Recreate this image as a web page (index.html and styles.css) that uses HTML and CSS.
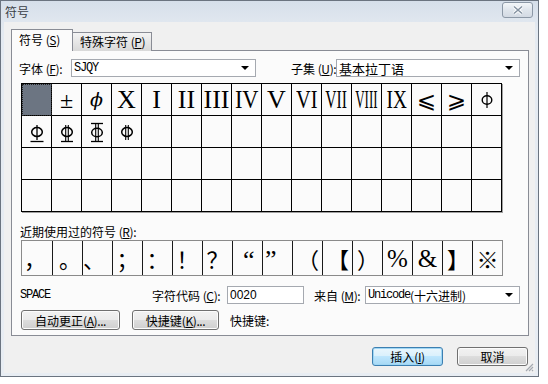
FILE: index.html
```html
<!DOCTYPE html>
<html lang="zh-CN">
<head>
<meta charset="utf-8">
<title>符号</title>
<link rel="stylesheet" href="styles.css">
</head>
<body>
<div class="window">
  <div class="titlebar">
    <span class="title">符号</span>
    <div class="close">
      <svg width="16" height="10" viewBox="0 0 16 10"><path d="M4 1.5 L12 8.5 M12 1.5 L4 8.5" stroke="#fff" stroke-width="3.2" fill="none"/><path d="M4 1.5 L12 8.5 M12 1.5 L4 8.5" stroke="#8593a2" stroke-width="1.6" fill="none"/></svg>
    </div>
  </div>
  <div class="client">
    <div class="tabs">
      <div class="tab active">符号 <span class="acc">(<u>S</u>)</span></div>
      <div class="tab">特殊字符 <span class="acc">(<u>P</u>)</span></div>
    </div>
    <div class="panel">
      <div class="row fontrow">
        <span class="lbl l-font">字体 <span class="acc">(<u>F</u>):</span></span>
        <div class="select s-font"><span class="mono">SJQY</span><i class="arrow"></i></div>
        <span class="lbl l-sub">子集 <span class="acc">(<u>U</u>):</span></span>
        <div class="select s-sub"><span>基本拉丁语</span><i class="arrow"></i></div>
      </div>

      <div class="grid">
        <div class="cell sel"></div>
        <div class="cell"><span class="sy">±</span></div>
        <div class="cell"><span class="sy phi">ϕ</span></div>
        <div class="cell"><span class="rn">X</span></div>
        <div class="cell"><span class="rn">I</span></div>
        <div class="cell"><span class="rn">II</span></div>
        <div class="cell"><span class="rn">III</span></div>
        <div class="cell"><span class="rn c-iv">IV</span></div>
        <div class="cell"><span class="rn">V</span></div>
        <div class="cell"><span class="rn c-vi">VI</span></div>
        <div class="cell"><span class="rn c-vii">VII</span></div>
        <div class="cell"><span class="rn c-viii">VIII</span></div>
        <div class="cell"><span class="rn c-ix">IX</span></div>
        <div class="cell"><span class="sy le">⩽</span></div>
        <div class="cell"><span class="sy le">⩾</span></div>
        <div class="cell"><svg width="14" height="20" viewBox="0 0 14 20"><ellipse cx="7" cy="10" rx="4.8" ry="4.3" fill="none" stroke="#000" stroke-width="1.4"/><path d="M7 2 V18" stroke="#000" stroke-width="1.2"/></svg></div>

        <div class="cell"><svg width="16" height="22" viewBox="0 0 16 22"><ellipse cx="8" cy="11" rx="5.3" ry="4.5" fill="none" stroke="#000" stroke-width="1.5"/><path d="M8 4 V19" stroke="#000" stroke-width="1.3"/><path d="M1.5 20.5 H14.5" stroke="#000" stroke-width="1.3"/></svg></div>
        <div class="cell"><svg width="16" height="22" viewBox="0 0 16 22"><ellipse cx="8" cy="11" rx="5.3" ry="4.5" fill="none" stroke="#000" stroke-width="1.5"/><path d="M6.7 4 V20 M9.3 4 V20" stroke="#000" stroke-width="1.1"/><path d="M2 20.5 H14" stroke="#000" stroke-width="1.3"/></svg></div>
        <div class="cell"><svg width="16" height="22" viewBox="0 0 16 22"><path d="M2 2.5 H14" stroke="#000" stroke-width="1.3"/><ellipse cx="8" cy="11.5" rx="5.3" ry="4.3" fill="none" stroke="#000" stroke-width="1.5"/><path d="M6.7 2.5 V20.5 M9.3 2.5 V20.5" stroke="#000" stroke-width="1.1"/><path d="M2 20.5 H14" stroke="#000" stroke-width="1.3"/></svg></div>
        <div class="cell"><svg width="16" height="22" viewBox="0 0 16 22"><ellipse cx="8" cy="11" rx="5.3" ry="4.5" fill="none" stroke="#000" stroke-width="1.5"/><path d="M6.7 4 V19 M9.3 4 V19" stroke="#000" stroke-width="1.1"/></svg></div>
        <div class="cell"></div><div class="cell"></div><div class="cell"></div><div class="cell"></div>
        <div class="cell"></div><div class="cell"></div><div class="cell"></div><div class="cell"></div>
        <div class="cell"></div><div class="cell"></div><div class="cell"></div><div class="cell"></div>

        <div class="cell"></div><div class="cell"></div><div class="cell"></div><div class="cell"></div>
        <div class="cell"></div><div class="cell"></div><div class="cell"></div><div class="cell"></div>
        <div class="cell"></div><div class="cell"></div><div class="cell"></div><div class="cell"></div>
        <div class="cell"></div><div class="cell"></div><div class="cell"></div><div class="cell"></div>

        <div class="cell"></div><div class="cell"></div><div class="cell"></div><div class="cell"></div>
        <div class="cell"></div><div class="cell"></div><div class="cell"></div><div class="cell"></div>
        <div class="cell"></div><div class="cell"></div><div class="cell"></div><div class="cell"></div>
        <div class="cell"></div><div class="cell"></div><div class="cell"></div><div class="cell"></div>
      </div>

      <div class="recent-label">近期使用过的符号 <span class="acc">(<u>R</u>):</span></div>
      <div class="recent">
        <div class="rc al p2">，</div>
        <div class="rc al p6">。</div>
        <div class="rc al">、</div>
        <div class="rc">；</div>
        <div class="rc">：</div>
        <div class="rc">！</div>
        <div class="rc">？</div>
        <div class="rc al q q1">“</div>
        <div class="rc al q q2">”</div>
        <div class="rc ar r4">（</div>
        <div class="rc ar r4">【</div>
        <div class="rc al p4">）</div>
        <div class="rc pct">%</div>
        <div class="rc pct">&amp;</div>
        <div class="rc al p4">】</div>
        <div class="rc">※</div>
      </div>

      <div class="row coderow">
        <span class="mono space">SPACE</span>
        <span class="lbl l-code">字符代码 <span class="acc">(<u>C</u>):</span></span>
        <div class="input">0020</div>
        <span class="lbl l-from">来自 <span class="acc">(<u>M</u>):</span></span>
        <div class="select s-from"><span class="mono">Unicode</span><span>(十六进制)</span><i class="arrow"></i></div>
      </div>

      <div class="row btnrow">
        <div class="btn b-auto">自动更正 <span class="acc">(<u>A</u>)...</span></div>
        <div class="btn b-key">快捷键 <span class="acc">(<u>K</u>)...</span></div>
        <span class="lbl l-key">快捷键:</span>
      </div>
    </div>

    <div class="dlg-buttons">
      <div class="btn dlg default">插入 <span class="acc">(<u>I</u>)</span></div>
      <div class="btn dlg">取消</div>
    </div>

    <svg class="grip" width="10" height="10" viewBox="0 0 10 10"><path d="M9 2 L2 9 M9 5 L5 9 M9 8 L8 9" stroke="#a4a9b0" stroke-width="1.2"/></svg>
  </div>
</div>
</body>
</html>
```

FILE: styles.css
```css
* { box-sizing: border-box; }

html, body {
  margin: 0;
  padding: 0;
  background: #fff;
}

body {
  width: 548px;
  height: 384px;
  font-family: "Noto Sans CJK SC", "Noto Sans", sans-serif;
  font-size: 12px;
  color: #000;
}

u { text-decoration: underline; text-underline-offset: 1px; }

.acc { letter-spacing: -0.4px; }

.window {
  width: 539px;
  height: 377px;
  border: 1px solid #6b7480;
  background: linear-gradient(#d6dfea, #e4eaf1 30px, #e8edf3);
  display: flex;
  flex-direction: column;
  padding: 0 3px 3px 3px;
}

.titlebar {
  height: 21px;
  display: flex;
  align-items: flex-start;
  margin: 0 -3px;
  padding: 0 5px 0 4px;
}

.title {
  font-size: 12px;
  line-height: 20px;
  color: #3a3f46;
  margin-top: 1px;
}

.close {
  margin-left: auto;
  margin-top: 1px;
  width: 31px;
  height: 16px;
  border: 1px solid #8c98a6;
  border-radius: 3px;
  background: linear-gradient(#f3f6f9, #dfe5ec 50%, #d3dae3);
  display: flex;
  align-items: center;
  justify-content: center;
}

.client {
  position: relative;
  flex: 1;
  background: #f0f0f0;
  padding-top: 7px;
  display: flex;
  flex-direction: column;
}

.tabs {
  display: flex;
  align-items: flex-end;
  margin-left: 7px;
  height: 22px;
  margin-bottom: -1px;
  position: relative;
  z-index: 1;
}

.tab {
  height: 19px;
  padding: 0 7px;
  border: 1px solid #898c95;
  border-bottom: none;
  background: linear-gradient(#f4f4f4, #e6e6e6 50%, #d9d9d9);
  line-height: 18px;
  width: 80px;
  white-space: nowrap;
}

.tab.active {
  height: 22px;
  width: 62px;
  margin-right: -1px;
  background: #fbfbfb;
  line-height: 20px;
  padding: 0 7px;
  position: relative;
  z-index: 2;
}

.panel {
  margin-left: 7px;
  width: 518px;
  height: 286px;
  border: 1px solid #898c95;
  background: #fbfbfb;
  display: flex;
  flex-direction: column;
}

.row {
  display: flex;
  align-items: center;
}

.lbl { white-space: nowrap; }

.mono {
  font-family: "Liberation Mono", monospace;
  font-size: 12px;
  letter-spacing: -1.2px;
}

.fontrow {
  margin-top: 8px;
  height: 18px;
  padding-left: 7px;
}

.l-font { width: 52px; }

.select {
  display: flex;
  align-items: center;
  height: 18px;
  border: 1px solid #a5a9b0;
  background: #fff;
  padding-left: 2px;
  white-space: nowrap;
}

.select .arrow {
  margin-left: auto;
  margin-right: 6px;
  width: 0;
  height: 0;
  border-left: 4px solid transparent;
  border-right: 4px solid transparent;
  border-top: 4px solid #000;
}

.s-font { width: 185px; }
.l-sub { margin-left: 35px; width: 45px; }
.s-sub { width: 184px; font-size: 13px; }

.grid {
  margin-top: 6px;
  margin-left: 9px;
  width: 481px;
  display: grid;
  grid-template-columns: repeat(16, 30px);
  grid-auto-rows: 32px;
  border-left: 1px solid #000;
  border-top: 1px solid #000;
  box-shadow: 1px 1px 0 #a0a0a0;
}

.cell {
  border-right: 1px solid #000;
  border-bottom: 1px solid #000;
  display: flex;
  align-items: center;
  justify-content: center;
  overflow: hidden;
}

.cell.sel {
  background: #6c7582;
  outline: 1px dotted #222;
  outline-offset: -1px;
}

.rn {
  font-family: "Liberation Serif", serif;
  font-size: 26px;
  line-height: 1;
  display: inline-block;
  white-space: nowrap;
  margin-top: 1px;
}

.c-iv { transform: scaleX(0.86); }
.c-vi { transform: scaleX(0.78); }
.c-vii { transform: scaleX(0.6); }
.c-viii { transform: scaleX(0.5); }
.c-ix { transform: scaleX(0.74); }

.sy {
  font-family: "Liberation Serif", "DejaVu Serif", serif;
  font-size: 24px;
  line-height: 1;
}

.phi {
  font-family: "DejaVu Serif", serif;
  font-style: italic;
  font-size: 19px;
}

.le {
  font-family: "DejaVu Sans", sans-serif;
  font-size: 23px;
  margin-top: 1px;
}

.recent-label {
  margin-top: 12px;
  padding-left: 8px;
  height: 16px;
  line-height: 16px;
}

.recent {
  margin-left: 9px;
  width: 482px;
  height: 36px;
  border: 1px solid #8a8a8a;
  display: grid;
  grid-template-columns: repeat(16, 1fr);
}

.rc {
  border-left: 1px solid #1a1a1a;
  display: flex;
  align-items: center;
  justify-content: center;
  font-family: "Noto Sans CJK SC", sans-serif;
  font-size: 22px;
  line-height: 1;
  min-width: 0;
}

.rc:first-child { border-left: none; }
.rc.al { justify-content: flex-start; }
.rc.ar { justify-content: flex-end; }
.rc.p2 { padding-left: 2px; }
.rc.p4 { padding-left: 4px; }
.rc.p6 { padding-left: 6px; }
.rc.r4 { padding-right: 3px; }
.rc.q {
  font-family: "Liberation Serif", serif;
  font-size: 26px;
  align-items: flex-start;
  padding-top: 6px;
}
.rc.q1 { padding-left: 10px; }
.rc.q2 { padding-left: 2px; }

.pct {
  font-family: "Liberation Serif", serif;
  font-size: 25px;
}

.coderow {
  margin-top: 10px;
  height: 18px;
  padding-left: 8px;
}

.space { width: 132px; }
.l-code { width: 75px; }

.input {
  width: 77px;
  height: 18px;
  border: 1px solid #a5a9b0;
  background: #fff;
  padding-left: 2px;
  line-height: 16px;
  font-family: "Liberation Sans", sans-serif;
  font-size: 12px;
}

.l-from { margin-left: 10px; width: 51px; }
.s-from { width: 155px; }

.btnrow {
  margin-top: 6px;
  height: 20px;
  padding-left: 9px;
}

.btn {
  height: 20px;
  border: 1px solid #707070;
  border-radius: 3px;
  background: linear-gradient(#f2f2f2, #ebebeb 50%, #dddddd 50%, #cfcfcf);
  box-shadow: inset 0 0 0 1px #fcfcfc;
  display: flex;
  align-items: center;
  justify-content: center;
  white-space: nowrap;
}

.b-auto { width: 99px; }
.b-key { width: 87px; margin-left: 12px; }
.l-key { margin-left: 11px; }

.dlg-buttons {
  display: flex;
  justify-content: flex-end;
  gap: 14px;
  margin-top: 11px;
  margin-right: 7px;
}

.dlg {
  width: 71px;
  height: 19px;
}

.dlg.default {
  border-color: #3c7fb1;
  box-shadow: inset 0 0 0 1px #9fd6f4;
  background: linear-gradient(#eaf6fd, #d9f0fc 50%, #bee6fd 50%, #a7d9f5);
}

.grip {
  position: absolute;
  right: 1px;
  bottom: 1px;
}
```
